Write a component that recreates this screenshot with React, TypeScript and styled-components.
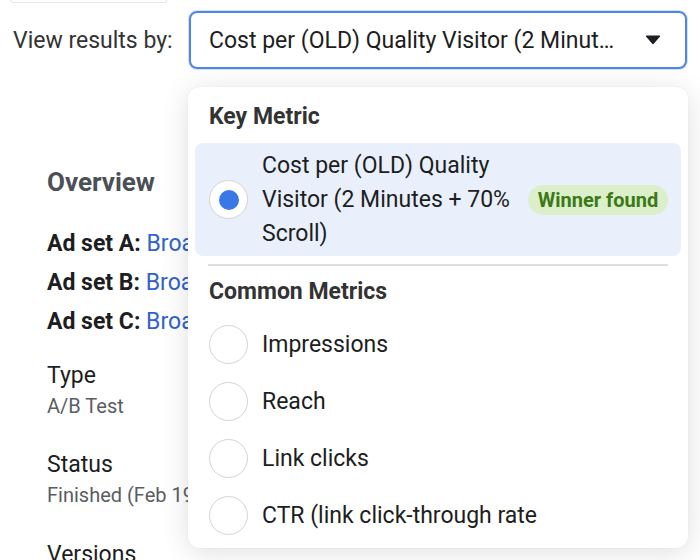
import React, { FC } from 'react';
import styled, { createGlobalStyle } from 'styled-components';

const GlobalStyle = createGlobalStyle`
  html, body {
    margin: 0;
    padding: 0;
    background: #ffffff;
  }
  body {
    font-family: Roboto, "Noto Sans", "Liberation Sans", sans-serif;
    color: #1c1e21;
    -webkit-font-smoothing: antialiased;
  }
`;

const Page = styled.div`
  position: relative;
  width: 700px;
  height: 560px;
  overflow: hidden;
`;

const TabEdge = styled.div`
  margin-left: 10px;
  width: 155px;
  height: 2px;
  border: 1px solid #dfe7f6;
  border-top: none;
  border-radius: 0 0 6px 6px;
`;

const Toolbar = styled.div`
  display: flex;
  align-items: center;
  gap: 14px;
  padding: 8px 0 0 13px;
`;

const Label = styled.span`
  width: 162px;
  font-size: 23px;
  white-space: nowrap;
  color: #333;
`;

const Select = styled.div`
  display: flex;
  align-items: center;
  justify-content: space-between;
  box-sizing: border-box;
  width: 498px;
  height: 58px;
  padding: 0 24px 0 18px;
  border: 2px solid #4f84e8;
  border-radius: 8px;
  box-shadow: 0 0 0 1px #d5e1f8;
  font-size: 23px;
  white-space: nowrap;
  color: #1c1e21;
`;

const Caret = styled.svg`
  width: 16px;
  height: 10px;
  fill: #1c1e21;
`;

const Overview = styled.section`
  display: flex;
  flex-direction: column;
  width: 141px;
  overflow: hidden;
  padding: 98px 0 0 47px;
  white-space: nowrap;
`;

const Heading = styled.h2`
  margin: 0 0 33px;
  font-size: 26px;
  line-height: 30px;
  font-weight: 700;
  color: #4b4f56;
`;

const AdSet = styled.div`
  font-size: 23px;
  line-height: 27px;
  margin-bottom: 12px;
  color: #1c1e21;
  b {
    font-weight: 700;
  }
  a {
    color: #3064c8;
    text-decoration: none;
  }
`;

const Field = styled.div<{ $top: number }>`
  display: flex;
  flex-direction: column;
  margin-top: ${(p) => p.$top}px;
`;

const FieldName = styled.div`
  font-size: 23px;
  line-height: 28px;
  color: #1c1e21;
`;

const FieldValue = styled.div`
  font-size: 20px;
  line-height: 24px;
  margin-top: 4px;
  color: #5a5d62;
`;

const Menu = styled.div`
  position: absolute;
  left: 188px;
  top: 87px;
  width: 500px;
  height: 461px;
  box-sizing: border-box;
  padding: 16px 7px 0;
  background: #fff;
  border-radius: 12px;
  box-shadow: 0 4px 28px rgba(0, 0, 0, 0.13), 0 0 2px rgba(0, 0, 0, 0.06);
  display: flex;
  flex-direction: column;
`;

const GroupTitle = styled.div`
  padding-left: 14px;
  font-size: 23px;
  line-height: 28px;
  font-weight: 700;
  color: #333;
`;

const Option = styled.div<{ $selected?: boolean }>`
  display: flex;
  align-items: center;
  gap: 14px;
  box-sizing: border-box;
  padding: ${(p) => (p.$selected ? '5px 13px 5px 14px' : '0 14px')};
  min-height: ${(p) => (p.$selected ? '113px' : '57px')};
  border-radius: 8px;
  background: ${(p) => (p.$selected ? '#e9f0fc' : 'transparent')};
`;

const Radio = styled.span<{ $checked?: boolean }>`
  flex: none;
  display: flex;
  align-items: center;
  justify-content: center;
  box-sizing: border-box;
  width: 39px;
  height: 39px;
  border-radius: 50%;
  border: 1.5px solid #d4d4d4;
  background: #fff;
  &::after {
    content: '';
    display: ${(p) => (p.$checked ? 'block' : 'none')};
    width: 20px;
    height: 20px;
    border-radius: 50%;
    background: #3b78e7;
  }
`;

const OptionText = styled.span<{ $wrap?: boolean }>`
  font-size: 23px;
  line-height: 34px;
  color: #1c1e21;
  width: ${(p) => (p.$wrap ? '262px' : 'auto')};
  white-space: ${(p) => (p.$wrap ? 'normal' : 'nowrap')};
`;

const Badge = styled.span`
  flex: none;
  margin-left: auto;
  display: inline-flex;
  align-items: center;
  justify-content: center;
  width: 140px;
  height: 30px;
  border-radius: 15px;
  background: #dcefcb;
  color: #3c7a17;
  font-size: 20px;
  font-weight: 700;
`;

const Divider = styled.hr`
  margin: 8px 13px 12px;
  border: none;
  border-top: 2px solid #dedede;
`;

const OptionList = styled.div<{ $top: number }>`
  display: flex;
  flex-direction: column;
  margin-top: ${(p) => p.$top}px;
`;

const common = ['Impressions', 'Reach', 'Link clicks', 'CTR (link click-through rate'];

const App: FC = () => (
  <>
    <GlobalStyle />
    <Page>
      <TabEdge />
      <Toolbar>
        <Label>View results by:</Label>
        <Select>
          <span>Cost per (OLD) Quality Visitor (2 Minut…</span>
          <Caret viewBox="0 0 16 10">
            <path d="M1 1.5 Q0.5 0.5 1.8 0.5 H14.2 Q15.5 0.5 15 1.5 L8.8 8.8 Q8 9.6 7.2 8.8 Z" />
          </Caret>
        </Select>
      </Toolbar>

      <Overview>
        <Heading>Overview</Heading>
        <AdSet><b>Ad set A:</b> <a>Broad</a></AdSet>
        <AdSet><b>Ad set B:</b> <a>Broad</a></AdSet>
        <AdSet><b>Ad set C:</b> <a>Broad</a></AdSet>
        <Field $top={15}>
          <FieldName>Type</FieldName>
          <FieldValue>A/B Test</FieldValue>
        </Field>
        <Field $top={33}>
          <FieldName>Status</FieldName>
          <FieldValue>Finished (Feb 19</FieldValue>
        </Field>
        <Field $top={34}>
          <FieldName>Versions</FieldName>
        </Field>
      </Overview>

      <Menu>
        <GroupTitle>Key Metric</GroupTitle>
        <OptionList $top={12}>
          <Option $selected>
            <Radio $checked />
            <OptionText $wrap>Cost per (OLD) Quality Visitor (2 Minutes + 70% Scroll)</OptionText>
            <Badge>Winner found</Badge>
          </Option>
        </OptionList>
        <Divider />
        <GroupTitle>Common Metrics</GroupTitle>
        <OptionList $top={10}>
          {common.map((name) => (
            <Option key={name}>
              <Radio />
              <OptionText>{name}</OptionText>
            </Option>
          ))}
        </OptionList>
      </Menu>
    </Page>
  </>
);

export default App;
